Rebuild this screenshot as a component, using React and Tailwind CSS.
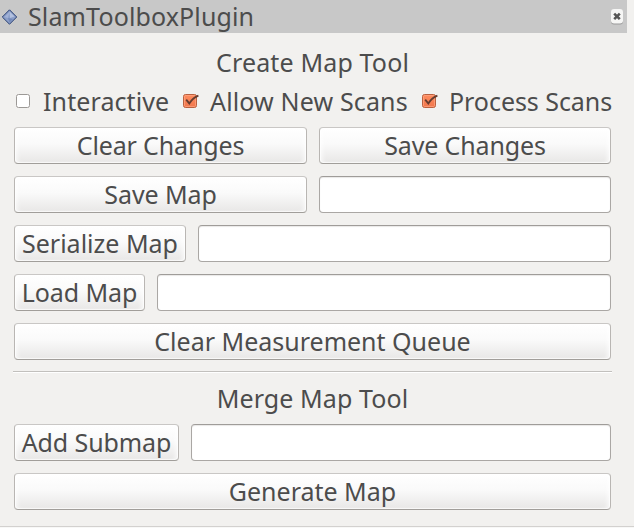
import React from 'react';

function Button({ className = '', children }) {
  return (
    <button
      className={`flex h-[37px] shrink-0 items-center justify-center whitespace-nowrap rounded-[4px] border border-[#b9b6b3] border-t-[#c9c7c5] border-b-[#a19e9a] bg-linear-to-b from-white via-[#fafafa] via-45% to-[#e8e7e6] pb-px shadow-[inset_0_0_0_1px_rgba(255,255,255,0.6),inset_4px_0_5px_-2px_rgba(255,255,255,0.8),inset_-4px_0_5px_-2px_rgba(255,255,255,0.8)] ${className}`}
    >
      {children}
    </button>
  );
}

function Field({ label }) {
  return (
    <input
      aria-label={label}
      className="h-[37px] min-w-0 flex-1 rounded-[4px] border border-[#aaa7a4] border-t-[#9f9c99] bg-white px-2 shadow-[inset_0_1px_1px_#e9e8e7] outline-none"
    />
  );
}

function Check({ checked }) {
  return (
    <svg className="size-[18px] shrink-0" viewBox="0 0 18 18" fill="none">
      <defs>
        <linearGradient id="orange" x1="0" y1="0" x2="0" y2="1">
          <stop offset="0" stopColor="#ff8d60" />
          <stop offset="1" stopColor="#f0764c" />
        </linearGradient>
      </defs>
      <rect x="1.5" y="2.5" width="13" height="13" rx="2" fill={checked ? 'url(#orange)' : '#fff'} stroke={checked ? '#b9603f' : '#9c9996'} />
      {checked && <rect x="2.5" y="3.5" width="11" height="11" rx="1" stroke="#ffa583" strokeOpacity=".7" />}
      {checked && <path d="M4.2 7.6 L7.3 11.4 C9.5 8 12 5.2 16.4 3.6" stroke="#663c2f" strokeWidth="1.8" />}
    </svg>
  );
}

export default function App() {
  return (
    <main className="flex h-[528px] w-[634px] flex-col overflow-hidden bg-[#f2f1ef] font-['Noto_Sans',sans-serif] text-[25px] leading-[34px] text-[#4c4c4c]">
      <header className="flex h-[33px] w-[627px] shrink-0 items-center bg-[#c8c8c8]">
        <svg className="ml-[2px] size-4 shrink-0" viewBox="0 0 16 16">
          <path d="M7.5 .8 L14.7 8 L7.5 15.2 L.3 8Z" fill="#8c9fc9" stroke="#283f72" />
          <path d="M7.5 2.5 L12.5 7.5 L8 9Z" fill="#b3c1df" />
          <path d="M2.5 8 L7.5 3 L6 9Z" fill="#a3b3d7" />
          <path d="M6 9 L11 10 L7.5 13.5Z" fill="#7389ba" />
        </svg>
        <span className="mb-[2px] ml-[10px] whitespace-nowrap tracking-[0.13px]">SlamToolboxPlugin</span>
        <svg className="mr-[2px] ml-auto size-4 shrink-0" viewBox="0 0 16 16">
          <rect x="2" y="1" width="12" height="14.5" rx="3" fill="#999" />
          <rect x="2" y="0" width="12" height="14.5" rx="3" fill="#f6f6f5" />
          <path d="M5.2 4.6 L10.8 10.2 M10.8 4.6 L5.2 10.2" stroke="#555" strokeWidth="2.6" />
        </svg>
      </header>
      <section className="flex w-[611px] flex-col pl-[14px]">
        <h2 className="mt-[12px] h-[34px] whitespace-nowrap text-center tracking-[0.15px]">Create Map Tool</h2>
        <div className="mt-[5px] flex h-[34px] items-center whitespace-nowrap pl-px">
          <label className="flex w-[167px] shrink-0 items-center gap-[10px]"><Check /><span className="tracking-[0.1px]">Interactive</span></label>
          <label className="flex w-[239px] shrink-0 items-center gap-[10px]"><Check checked /><span className="tracking-[0.15px]">Allow New Scans</span></label>
          <label className="flex shrink-0 items-center gap-[10px]"><Check checked /><span className="tracking-[-0.05px]">Process Scans</span></label>
        </div>
        <div className="mt-[9px] flex flex-col gap-3">
          <div className="flex gap-3">
            <Button className="w-[293px]"><span className="tracking-[-0.15px]">Clear Changes</span></Button>
            <Button className="w-[292px]"><span className="tracking-[-0.15px]">Save Changes</span></Button>
          </div>
          <div className="flex gap-3">
            <Button className="w-[293px]"><span className="tracking-[-0.1px]">Save Map</span></Button>
            <Field label="Map name" />
          </div>
          <div className="flex gap-3">
            <Button className="w-[172px]"><span>Serialize Map</span></Button>
            <Field label="Serialized map name" />
          </div>
          <div className="flex gap-3">
            <Button className="w-[131px]"><span className="tracking-[-0.1px]">Load Map</span></Button>
            <Field label="Map to load" />
          </div>
          <Button><span>Clear Measurement Queue</span></Button>
        </div>
        <hr className="-mr-px -ml-px mt-[11px] h-[2px] border-0 border-t border-[#c2c0bd] bg-white" />
        <h2 className="mt-[8px] h-[34px] whitespace-nowrap text-center tracking-[0.1px]">Merge Map Tool</h2>
        <div className="mt-[9px] flex flex-col gap-3">
          <div className="flex gap-3">
            <Button className="w-[165px]"><span className="tracking-[-0.1px]">Add Submap</span></Button>
            <Field label="Submap name" />
          </div>
          <Button><span>Generate Map</span></Button>
        </div>
      </section>
      <footer className="mt-[16px] h-[2px] shrink-0 border-t border-[#d3d1cf] bg-[#f8f8f7]" />
    </main>
  );
}
